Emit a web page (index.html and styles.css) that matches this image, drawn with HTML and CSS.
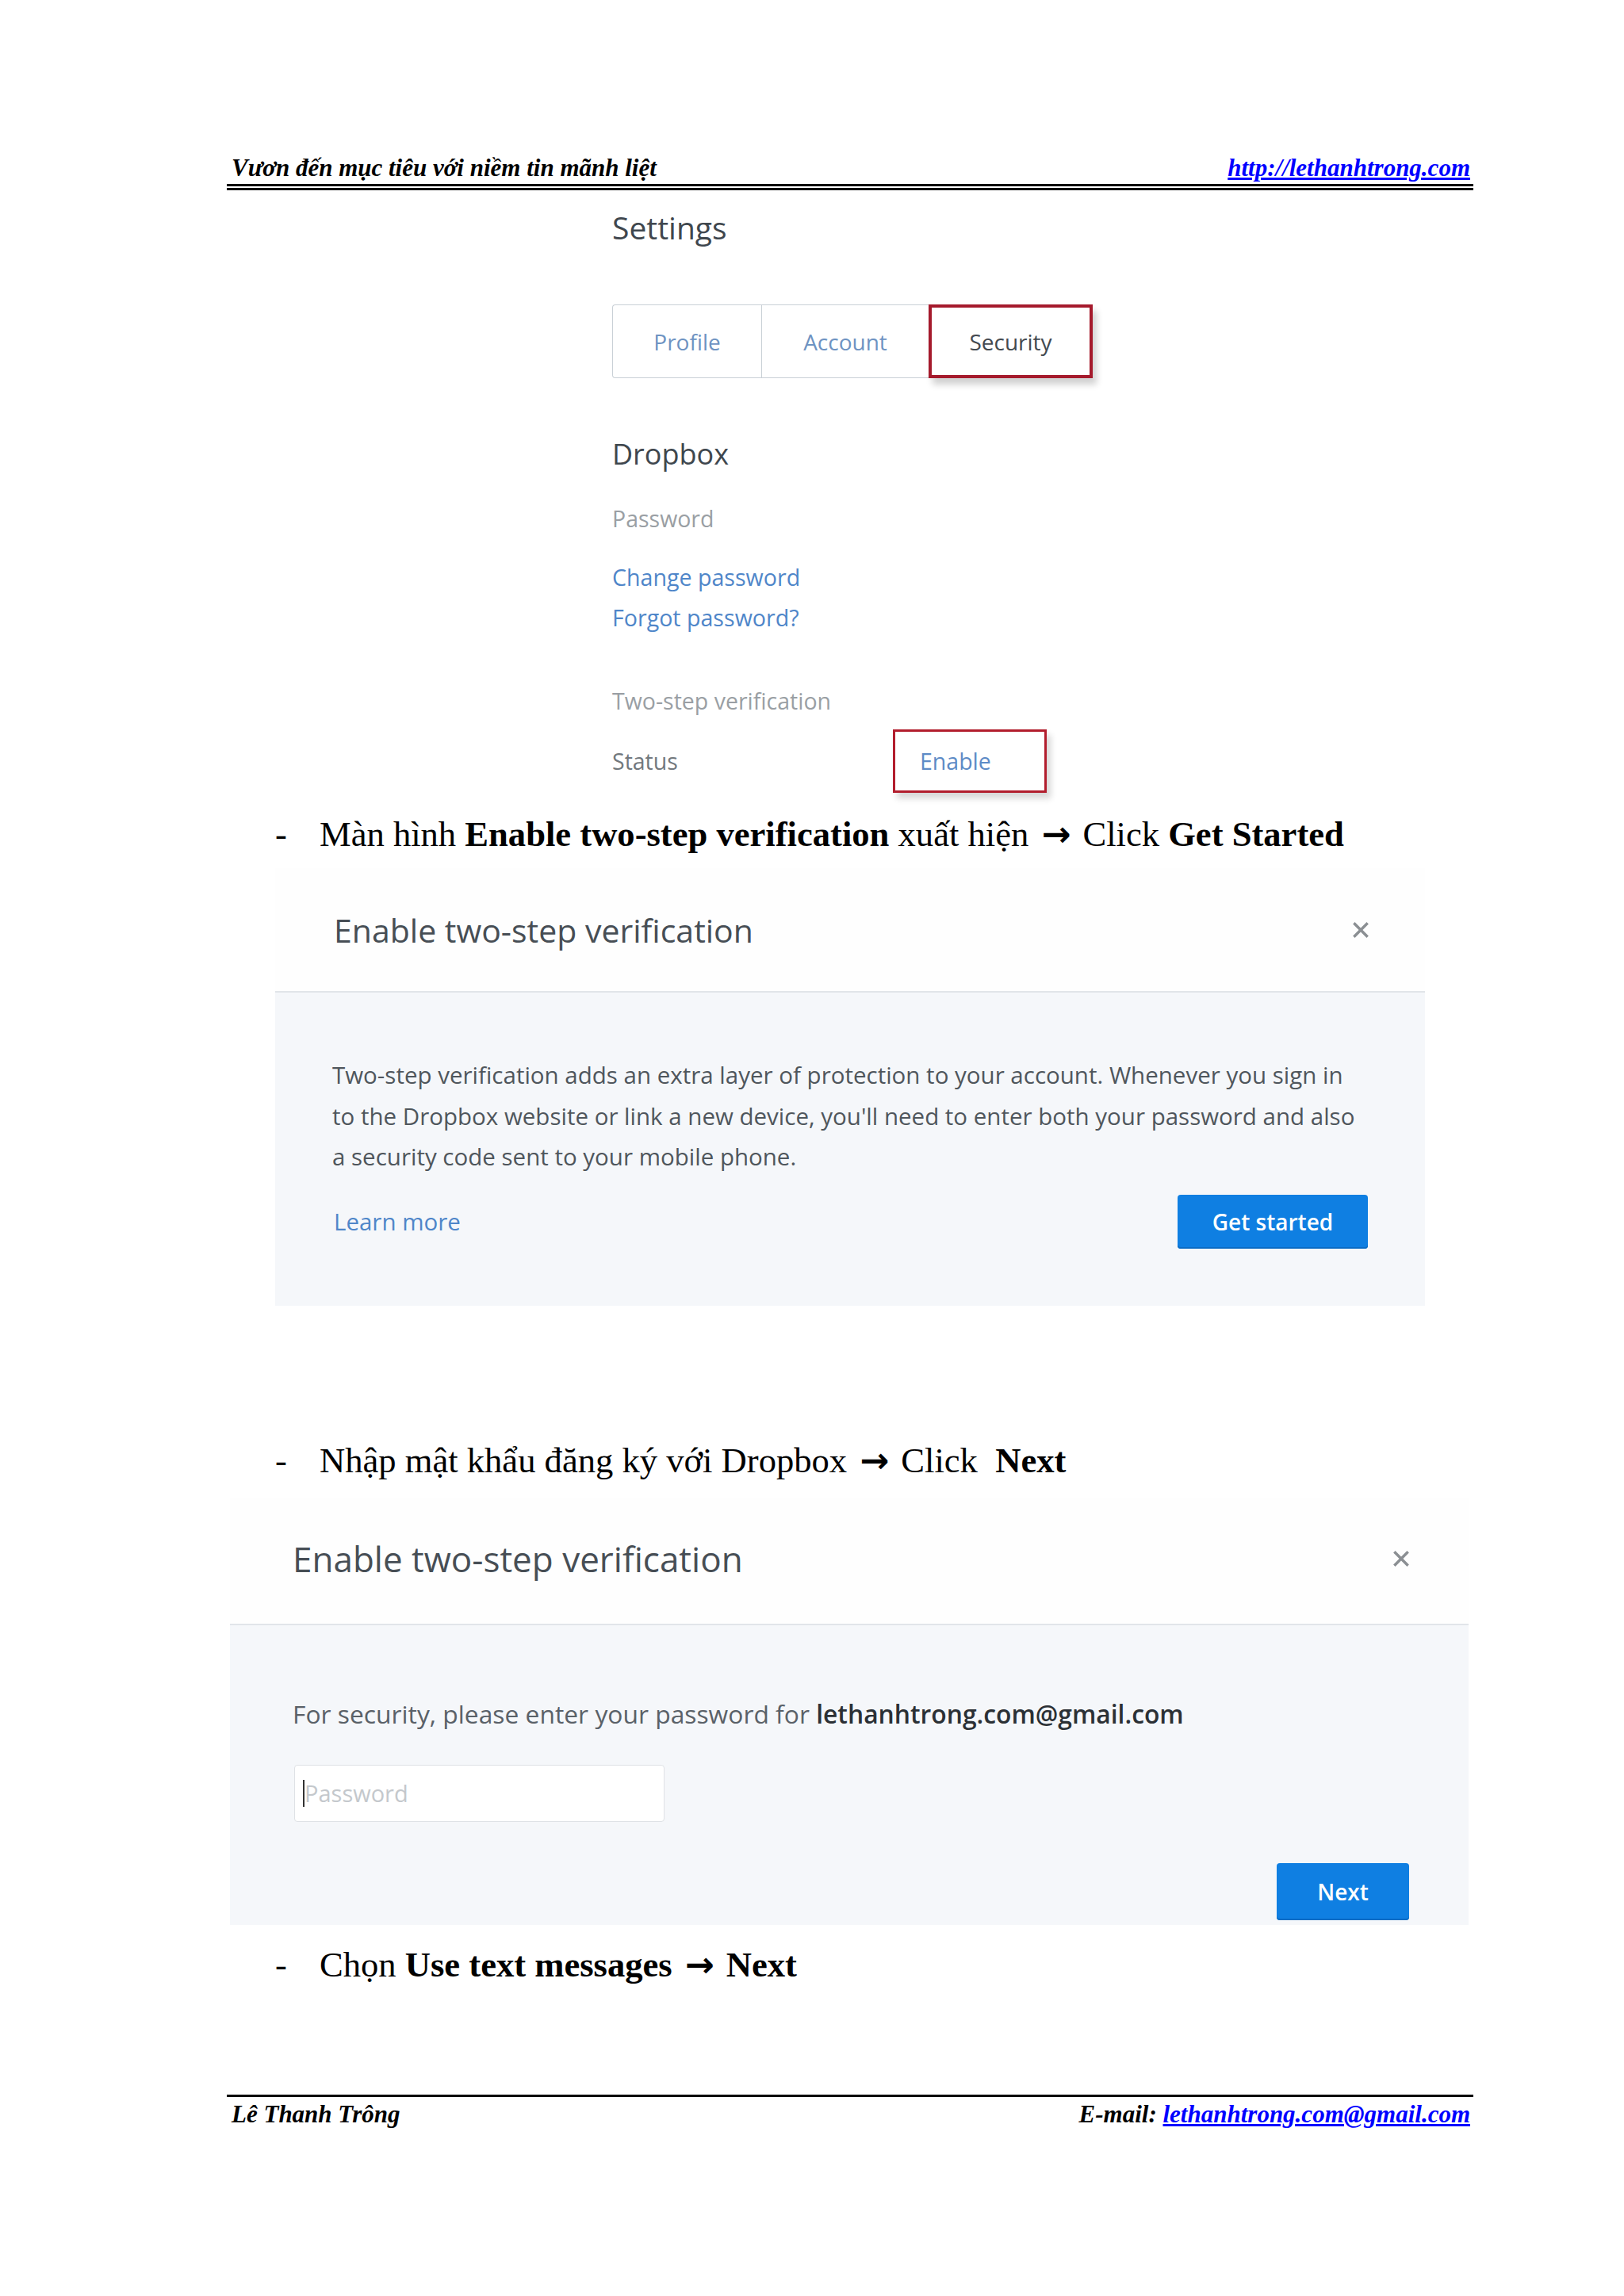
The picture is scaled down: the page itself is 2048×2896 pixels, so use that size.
FILE: index.html
```html
<!DOCTYPE html>
<html lang="vi">
<head>
    <meta charset="UTF-8">
    <meta name="viewport" content="width=device-width, initial-scale=1.0">
    <title>Dropbox - Two-step verification</title>
    <link rel="stylesheet" href="styles.css">
</head>
<body>
<div class="page">
    <!-- Page header -->
    <header class="doc-head">
        <span>Vươn đến mục tiêu với niềm tin mãnh liệt</span>
        <a href="#">http://lethanhtrong.com</a>
    </header>
    <div class="rule-double"></div>

    <!-- Settings screenshot -->
    <section class="settings">
        <h1 class="settings-title">Settings</h1>
        <div class="tabs">
            <span class="tab tab-profile">Profile</span>
            <span class="tab tab-account">Account</span>
            <span class="tab tab-security">Security</span>
        </div>
        <h2 class="settings-sub">Dropbox</h2>
        <p class="field-label label-password">Password</p>
        <div class="pw-links">
            <a href="#">Change password</a>
            <a href="#">Forgot password?</a>
        </div>
        <p class="field-label label-twostep">Two-step verification</p>
        <div class="status-row">
            <span class="status-label">Status</span>
            <span class="enable-box">Enable</span>
        </div>
    </section>

    <p class="step step-one"><span class="dash">-</span><span>Màn hình <b>Enable two-step verification</b> xuất hiện <span class="arrow">→</span> Click <b>Get Started</b></span></p>

    <!-- Dialog: intro -->
    <section class="dlg dlg-intro">
        <div class="dlg-head">
            <h2>Enable two-step verification</h2>
            <svg class="close" viewBox="0 0 24 24"><path d="M4 4L20 20M20 4L4 20"/></svg>
        </div>
        <div class="dlg-body">
            <p class="dlg-text">Two-step verification adds an extra layer of protection to your account. Whenever you sign in<br>to the Dropbox website or link a new device, you'll need to enter both your password and also<br>a security code sent to your mobile phone.</p>
            <div class="dlg-foot">
                <a href="#">Learn more</a>
                <button class="btn btn-start">Get started</button>
            </div>
        </div>
    </section>

    <p class="step step-two"><span class="dash">-</span><span>Nhập mật khẩu đăng ký với Dropbox <span class="arrow">→</span> Click&nbsp; <b>Next</b></span></p>

    <!-- Dialog: password -->
    <section class="dlg dlg-password">
        <div class="dlg-head">
            <h2>Enable two-step verification</h2>
            <svg class="close" viewBox="0 0 24 24"><path d="M4 4L20 20M20 4L4 20"/></svg>
        </div>
        <div class="dlg-body">
            <p class="pw-text">For security, please enter your password for <b>lethanhtrong.com@gmail.com</b></p>
            <div class="pw-field"><span class="caret"></span><span class="placeholder">Password</span></div>
            <div class="next-row">
                <button class="btn btn-next">Next</button>
            </div>
        </div>
    </section>

    <p class="step step-three"><span class="dash">-</span><span>Chọn <b>Use text messages</b> <span class="arrow">→</span> <b>Next</b></span></p>

    <!-- Page footer -->
    <div class="rule-single"></div>
    <footer class="doc-foot">
        <span>Lê Thanh Trông</span>
        <span>E-mail: <a href="#">lethanhtrong.com@gmail.com</a></span>
    </footer>
</div>
</body>
</html>
```

FILE: styles.css
```css
body {
    margin: 0;
    background-color: #ffffff;
    color: #000;
}

.page {
    width: 1572px;
    margin-left: 286px;
}

/* Document header / footer */
.doc-head,
.doc-foot {
    display: flex;
    justify-content: space-between;
    align-items: baseline;
    font: italic bold 31px/36px "Liberation Serif", serif;
    padding: 0 4px 0 6px;
}

.doc-head {
    padding-top: 194px;
}

.doc-foot {
    padding-top: 4px;
}

.doc-head a,
.doc-foot a {
    color: #0000ff;
    text-decoration: underline;
}

.rule-double {
    height: 2px;
    border-top: 3px solid #000;
    border-bottom: 3px solid #000;
    margin-top: 2px;
}

.rule-single {
    border-top: 3px solid #000;
    margin-top: 138px;
}

/* Settings screenshot */
.settings {
    padding-left: 486px;
    font-family: "Open Sans", sans-serif;
}

.settings-title {
    margin: 24px 0 0;
    font-size: 39px;
    line-height: 46px;
    font-weight: 400;
    color: #3f474e;
}

.tabs {
    display: flex;
    height: 93px;
    margin-top: 74px;
}

.tab {
    display: flex;
    align-items: center;
    justify-content: center;
    box-sizing: border-box;
    font-size: 28px;
    color: #6e93c2;
    border: 1px solid #c9d0d6;
    border-right: none;
}

.tab-profile {
    width: 188px;
    border-radius: 4px 0 0 4px;
}

.tab-account {
    width: 211px;
}

.tab-security {
    width: 207px;
    color: #444a50;
    border: 4px solid #a51a2c;
    box-shadow: 5px 8px 8px rgba(0, 0, 0, 0.18);
}

.settings-sub {
    margin: 74px 0 0;
    font-size: 36px;
    line-height: 44px;
    font-weight: 400;
    color: #3f474e;
}

.field-label {
    margin: 0;
    font-size: 28.5px;
    line-height: 36px;
    color: #9a9fa4;
}

.label-password {
    margin-top: 41px;
}

.pw-links {
    display: flex;
    flex-direction: column;
    align-items: flex-start;
    margin-top: 30px;
    font-size: 28.6px;
    line-height: 51px;
}

.pw-links a,
.dlg-foot a {
    color: #4f86c9;
    text-decoration: none;
}

.label-twostep {
    margin-top: 62px;
}

.status-row {
    display: flex;
    align-items: center;
    margin-top: 18px;
    font-size: 28.5px;
}

.status-label {
    width: 354px;
    color: #72787d;
}

.enable-box {
    display: flex;
    align-items: center;
    box-sizing: border-box;
    width: 194px;
    height: 80px;
    padding-left: 31px;
    border: 3px solid #b21d2d;
    color: #5d8bc6;
    box-shadow: 5px 7px 8px rgba(0, 0, 0, 0.16);
}

/* Steps */
.step {
    display: flex;
    margin: 0 0 0 61px;
    font: 44.6px/52px "Liberation Serif", serif;
}

.dash {
    width: 56px;
}

.arrow {
    display: inline-block;
    margin: 0 4px 0 5px;
    font-family: "DejaVu Sans", sans-serif;
    font-weight: bold;
    font-size: 44px;
    line-height: 40px;
}

.step-one {
    margin-top: 26px;
}

.step-two {
    margin-top: 169px;
}

.step-three {
    margin-top: 24px;
}

/* Dropbox dialogs */
.dlg {
    font-family: "Open Sans", sans-serif;
}

.dlg-head {
    display: flex;
    align-items: center;
    justify-content: space-between;
    background-color: #fefefe;
    border-bottom: 2px solid #e1e5e9;
}

.dlg-head h2 {
    margin: 0;
    font-weight: 400;
    color: #474e55;
}

.close {
    width: 26px;
    height: 26px;
}

.close path {
    stroke: #8b8f93;
    stroke-width: 3.2;
    fill: none;
}

.dlg-body {
    background-color: #f5f7fa;
}

.dlg-intro {
    width: 1450px;
    margin: 17px 0 0 61px;
}

.dlg-intro .dlg-head {
    height: 155px;
    padding: 0 68px 0 74px;
}

.dlg-intro h2 {
    font-size: 41px;
}

.dlg-intro .dlg-body {
    padding: 78px 72px 72px 72px;
}

.dlg-text {
    margin: 0;
    font-size: 29.5px;
    line-height: 51.5px;
    color: #4f565c;
}

.dlg-foot {
    display: flex;
    justify-content: space-between;
    align-items: center;
    margin-top: 22px;
    padding-left: 2px;
    font-size: 29.5px;
}

.btn {
    border: none;
    border-radius: 4px;
    background-color: #0f7fe2;
    color: #ffffff;
    font: 600 28px "Open Sans", sans-serif;
    box-shadow: inset 0 -2px 0 #0b6cc4;
}

.btn-start {
    width: 240px;
    height: 68px;
}

.dlg-password {
    width: 1562px;
    margin: 22px 0 0 4px;
}

.dlg-password .dlg-head {
    box-sizing: border-box;
    height: 160px;
    padding: 0 72px 6px 79px;
}

.dlg-password h2 {
    font-size: 44px;
}

.dlg-password .dlg-body {
    padding: 92px 75px 6px 79px;
}

.pw-text {
    margin: 0;
    font-size: 31.8px;
    line-height: 40px;
    color: #5a6168;
}

.pw-text b {
    font-weight: 600;
    color: #2b3035;
}

.pw-field {
    display: flex;
    align-items: center;
    box-sizing: border-box;
    width: 467px;
    height: 72px;
    margin: 44px 0 0 2px;
    padding-left: 10px;
    background-color: #ffffff;
    border: 1px solid #dfe2e6;
    border-radius: 4px;
}

.caret {
    width: 2px;
    height: 34px;
    background-color: #333;
}

.placeholder {
    font-size: 29px;
    color: #c4c8cc;
}

.next-row {
    display: flex;
    justify-content: flex-end;
    margin-top: 52px;
}

.btn-next {
    width: 167px;
    height: 72px;
}
```
